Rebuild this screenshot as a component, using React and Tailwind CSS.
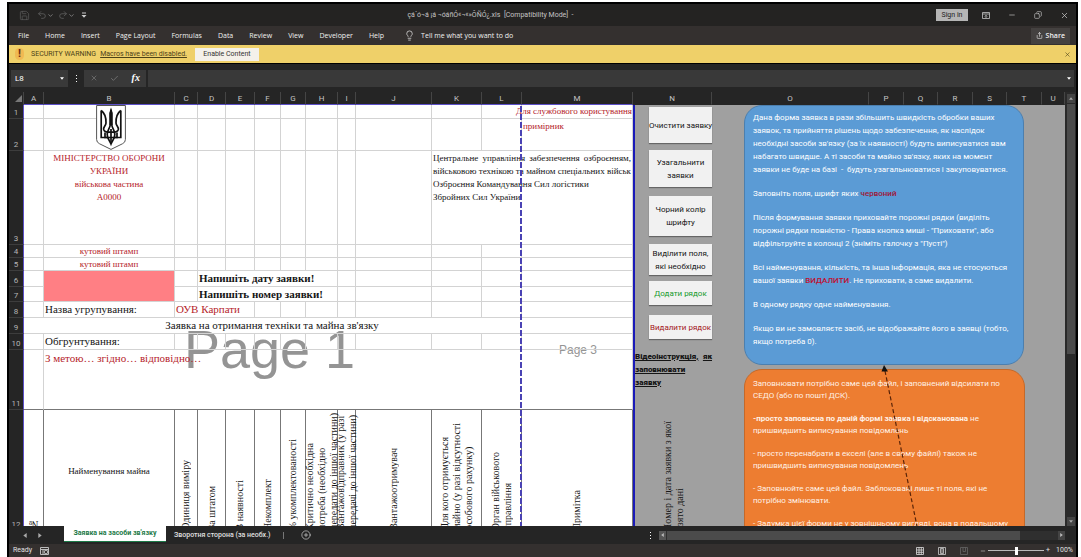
import {
  ChevronDown,
  Check,
  CirclePlus,
  Lightbulb,
  Minus,
  Copy,
  Redo2,
  Save,
  Share,
  Undo2,
  X,
} from "lucide-react";

const menu = ["File", "Home", "Insert", "Page Layout", "Formulas", "Data", "Review", "View", "Developer", "Help"];

const columns = [
  { name: "A", width: "w-[20px]" },
  { name: "B", width: "w-[131px]" },
  { name: "C", width: "w-[23px]" },
  { name: "D", width: "w-[28px]" },
  { name: "E", width: "w-[29px]" },
  { name: "F", width: "w-[26px]" },
  { name: "G", width: "w-[25px]" },
  { name: "H", width: "w-[32px]" },
  { name: "I", width: "w-[18px]" },
  { name: "J", width: "w-[76px]" },
  { name: "K", width: "w-[50px]" },
  { name: "L", width: "w-[40px]" },
  { name: "M", width: "w-[111px]" },
  { name: "N", width: "w-[79px]" },
  { name: "O", width: "w-[157px]" },
  { name: "P", width: "w-[35px]" },
  { name: "Q", width: "w-[34px]" },
  { name: "R", width: "w-[35px]" },
  { name: "S", width: "w-[34px]" },
  { name: "T", width: "w-[35px]" },
  { name: "U", width: "w-auto" },
];

const macros = [
  { lines: ["Очистити заявку"], box: "h-9 mb-[7px]" },
  { lines: ["Узагальнити", "заявки"], box: "h-[37px] mb-[9px]" },
  { lines: ["Чорний колір", "шрифту"], box: "h-10 mb-2" },
  { lines: ["Виділити поля,", "які необхідно"], box: "h-[31px] mb-1.5" },
  { lines: ["Додати рядок"], box: "h-6 mb-2.5 text-[#159a2c]" },
  { lines: ["Видалити рядок"], box: "h-6 mb-2.5 text-[#a3161b]" },
];

const headings = [
  ["№"],
  null,
  ["Одиниця виміру"],
  ["За штатом"],
  ["В наявності"],
  ["Некомплект"],
  ["% укомплектованості"],
  ["Критично необхідна", "потреба (необхідно", "передати до іншої частини)"],
  ["Вантажовідправник (у разі", "передачі до іншої частини)"],
  ["Вантажоотримувач"],
  ["Для кого отримується", "майно (у разі відсутності", "особового рахунку)"],
  ["Орган військового", "управління"],
  ["Примітка"],
];

const Lines = ({ lines }) => lines.map((line) => <span key={line} className="block">{line}</span>);

function Cell({ className = "", children, ...rest }) {
  return (
    <td className={`border-b border-r border-[#d3d3d3] p-0 whitespace-nowrap ${className}`} {...rest}>
      {children}
    </td>
  );
}

function Blanks({ count }) {
  return Array.from({ length: count }, (_, i) => <Cell key={i} />);
}

function RowHead({ n }) {
  return (
    <th scope="row" className="border-b border-r border-b-[#3d3d3d] border-r-[#5c50c8] bg-[#252525] p-0 align-bottom font-[Roboto,sans-serif] text-[8px] leading-[11px] font-normal text-[#b5b5b5]">
      {n}
    </th>
  );
}

function Vertical({ lines }) {
  return (
    <div className="flex justify-center">
      <div className="rotate-180 text-[10px] leading-[12px] [writing-mode:vertical-rl]">
        <Lines lines={lines} />
      </div>
    </div>
  );
}

function Emblem() {
  return (
    <svg viewBox="0 0 30 45" className="absolute top-0 left-[52px] h-[45px] w-[30px]">
      <path d="M.6.5h28.8v34q0 3-3 4.300L15 44.400 3.600 38.800q-3-1.300-3-4.300z" fill="#fff" stroke="#555" />
      <g fill="none" stroke="#111" strokeWidth="1.700">
        <path d="M5.200 5.500v27h6.300M24.800 5.500v27h-6.300" />
        <path d="M5.200 5.500c4 3 5 7 4.800 12.500-.1 3-3 4-2.300 6.500.7 2.300 4 3 7.300 2.500M24.800 5.500c-4 3-5 7-4.800 12.500.1 3 3 4 2.300 6.500-.7 2.300-4 3-7.300 2.500" />
        <path d="M15 5c-1.500 4 0 10-.8 15-.5 4-3 5-3 9.500 0 4 2.300 6 3.800 9.500 1.500-3.500 3.800-5.500 3.800-9.500 0-4.500-2.500-5.500-3-9.500-.8-5 .7-11-.8-15z" />
        <path d="M15 24v13M9 27.500v5h12v-5" />
      </g>
      <path d="M15 4l1.600 4v12h-3.200V8z" fill="#111" />
    </svg>
  );
}

function TitleBar() {
  return (
    <header className="flex h-[22px] items-center bg-[#242322] text-[7px] text-[#c4c4c4]">
      <div className="flex items-center pl-2.5 text-[#5e5e5e]">
        <button aria-label="Save"><Save className="size-[11px]" strokeWidth={1.5} /></button>
        <button aria-label="Undo" className="ml-[7px] flex items-center"><Undo2 className="size-[10px]" /><ChevronDown className="size-[7px] text-[#aaa]" /></button>
        <button aria-label="Redo" className="ml-1 flex items-center"><Redo2 className="size-[10px]" /><ChevronDown className="size-[7px] text-[#aaa]" /></button>
        <button aria-label="Customize" className="ml-1.5 text-[#ccc]">
          <svg viewBox="0 0 6 6" className="size-1.5"><path d="M1 .5h4v1H1zM.5 3h5L3 5.800z" fill="currentColor" /></svg>
        </button>
      </div>
      <h1 className="flex-1 pr-[42px] text-center whitespace-pre">çá´ó¬á ¡á ¬óáñÓ«¬«»ÔÑÓ¿.xls  [Compatibility Mode]  -</h1>
      <button className="h-3 w-8 bg-[#b5b5b5] leading-[11px] text-[#222]">Sign in</button>
      <button aria-label="Ribbon options" className="ml-3.5">
        <svg viewBox="0 0 8 7" className="h-[7px] w-2" fill="none" stroke="currentColor"><path d="M.5.5h7v6h-7zM.5 2h7M4 6V3.500M2.800 4.500L4 3.300l1.200 1.200" strokeWidth=".8" /></svg>
      </button>
      <button aria-label="Minimize" className="ml-[18px]"><Minus className="size-2" /></button>
      <button aria-label="Restore" className="ml-[18px]"><Copy className="size-2 -scale-x-100" /></button>
      <button aria-label="Close" className="mr-[7px] ml-[18px]"><X className="size-[9px]" /></button>
    </header>
  );
}

function Ribbon() {
  return (
    <nav className="flex h-[19px] items-center bg-[#34302f] pr-1.5 pl-[9px] font-['Open_Sans',sans-serif] text-[7px] text-[#f0f0f0]">
      <div className="flex gap-4">
        {menu.map((item) => <button key={item}>{item}</button>)}
      </div>
      <button className="ml-5 flex items-center gap-1.5">
        <Lightbulb className="size-[11px]" strokeWidth={1.5} />
        Tell me what you want to do
      </button>
      <button className="ml-auto flex h-4 items-center gap-[3px] bg-[#444140] px-[5px] font-semibold">
        <Share className="size-[7px]" /> Share
      </button>
    </nav>
  );
}

function Warning() {
  return (
    <div className="flex h-[18px] items-center bg-[#efd069] pr-[5px] pl-1.5 text-[7px] text-[#4c4218]">
      <span className="grid h-3 w-[9px] place-items-center rounded-full bg-[#f0b952] text-[11px] leading-3 font-bold text-[#6d2f14]">!</span>
      <span className="ml-[7px]">SECURITY WARNING</span>
      <a href="#macros" className="ml-1 underline">Macros have been disabled.</a>
      <button className="ml-2 h-[13px] w-16 bg-[#f4f1ea] text-[#333]">Enable Content</button>
      <button aria-label="Dismiss" className="ml-auto"><X className="size-[7px]" /></button>
    </div>
  );
}

function FormulaBar() {
  return (
    <div className="flex h-[29px] items-center border-t border-black bg-[#252525] px-0.5 text-[9px] text-white">
      <div className="flex h-[17px] w-[57px] items-center bg-[#393939] px-1">
        <input aria-label="Name box" defaultValue="L8" className="w-10 min-w-0 bg-transparent text-[8px] outline-none" />
        <svg viewBox="0 0 6 4" className="ml-auto h-[3px] w-1"><path d="M0 0h6L3 4z" fill="#fff" /></svg>
      </div>
      <span className="flex w-4 flex-col items-center gap-0.5">
        <i className="size-px bg-white" /><i className="size-px bg-white" /><i className="size-px bg-white" />
      </span>
      <div className="mr-0.5 flex h-[17px] w-[62px] items-center justify-around bg-[#393939] text-[#7d7d7d]">
        <button aria-label="Cancel"><X className="size-2" /></button>
        <button aria-label="Enter"><Check className="size-[9px]" /></button>
        <button aria-label="Insert function" className="font-['Liberation_Serif',serif] text-[10px] font-bold text-white italic">fx</button>
      </div>
      <div className="flex h-[17px] flex-1 items-center bg-[#393939] pr-[3px]">
        <input aria-label="Formula" className="min-w-0 flex-1 bg-transparent outline-none" />
        <svg viewBox="0 0 6 4" className="h-[3px] w-1"><path d="M0 0h6L3 4z" fill="#fff" /></svg>
      </div>
    </div>
  );
}

function Notes() {
  return (
    <div className="relative h-[426px] overflow-hidden pl-8 font-[Roboto,sans-serif] text-[8px] text-white">
      <section className="flex h-[260px] w-[280px] flex-col gap-[11px] rounded-[18px] border border-[#4c7fae] bg-[#5b9bd5] px-2 pt-[5px] leading-[13px]">
        <p>
          <Lines lines={[
            "Дана форма заявка в рази збільшить швидкість обробки ваших",
            "заявок, та прийняття рішень щодо забезпечення, як наслідок",
            "необхідні засоби зв'язку (за їх наявності) будуть виписуватися вам",
            "набагато швидше. А ті засоби та майно зв'язку, яких на момент",
            "заявки не буде на базі  -  будуть узагальнюватися і закуповуватися.",
          ]} />
        </p>
        <p>Заповніть поля, шрифт яких <b className="font-medium text-[#a01535]">червоний</b></p>
        <p>
          <Lines lines={[
            "Після формування заявки приховайте порожні рядки (виділіть",
            "порожні рядки повністю - Права кнопка миші - \"Приховати\", або",
            "відфільтруйте в колонці 2 (зніміть галочку з \"Пусті\")",
          ]} />
        </p>
        <p>
          Всі найменування, кількість, та інша інформація, яка не стосуються<br />
          вашої заявки <b className="font-medium text-[#c01030]">ВИДАЛИТИ</b>. Не приховати, а саме видалити.
        </p>
        <p>В одному рядку одне найменування.</p>
        <p><Lines lines={["Якщо ви не замовляєте засіб, не відображайте його в заявці (тобто,", "якщо потреба 0)."]} /></p>
      </section>
      <section className="mt-1 flex h-[200px] w-[281px] flex-col gap-[11px] rounded-[18px] border border-[#c4692a] bg-[#ed7d31] px-2 pt-2 leading-3 text-[#fff1e6]">
        <p><Lines lines={["Заповнювати потрібно саме цей файл, і заповнений відсилати по", "СЕДО (або по пошті ДСК)."]} /></p>
        <p><b>-просто заповнена по даній формі заявка і відсканована</b> не<br />пришвидшить виписування повідомлень</p>
        <p><Lines lines={["- просто перенабрати в екселі (але в свому файлі) також не", "пришвидшить виписування повідомлень"]} /></p>
        <p><Lines lines={["- Заповнюйте саме цей файл. Заблоковані лише ті поля, які не", "потрібно змінювати."]} /></p>
        <p>- Задумка цієї форми не у зовнішньому вигляді, вона в подальшому</p>
      </section>
      <svg viewBox="0 0 40 166" className="absolute top-[260px] left-[169px] h-[166px] w-10">
        <path d="M4 6L37 166" stroke="#5a2408" strokeWidth="1.200" strokeDasharray="4 2.500" />
        <path d="M3 0l4 6.500H.5z" fill="#111" />
      </svg>
    </div>
  );
}

function Sheet() {
  return (
    <div className="relative min-w-0 flex-1 overflow-hidden bg-white font-['Liberation_Serif',serif] text-[9px] leading-[13px] text-[#151515]">
      <span className="absolute top-[227px] left-[175px] font-['Liberation_Sans',sans-serif] text-[54px] leading-[60px] text-[#949494]">Page 1</span>
      <span className="absolute top-[251px] left-[550px] font-['Liberation_Sans',sans-serif] text-[12px] leading-[14px] text-[#949494]">Page 3</span>
      <table className="relative w-full table-fixed border-separate border-spacing-0">
        <colgroup>
          <col className="w-[15px]" />
          {columns.map(({ name, width }) => <col key={name} className={width} />)}
        </colgroup>
        <thead className="bg-[#252525] font-[Roboto,sans-serif] text-[8px] leading-[11px] text-[#c4c4c4]">
          <tr className="h-[13px]">
            <th aria-label="Select all" className="border-r border-[#454545] p-0">
              <svg viewBox="0 0 8 8" className="ml-auto size-2"><path d="M7 0v7H0z" fill="#777" /></svg>
            </th>
            {columns.map(({ name }, i) => (
              <th key={name} scope="col" className={`border-r border-b border-r-[#454545] p-0 font-normal ${i < 13 ? "border-b-[#5c50c8]" : "border-b-[#252525]"}`}>{name}</th>
            ))}
          </tr>
        </thead>
        <tbody>
          <tr className="h-[14px]">
            <RowHead n={1} />
            <Cell />
            <Cell className="relative"><Emblem /></Cell>
            <Blanks count={10} />
            <Cell className="text-[#b5232a]">
              <span className="flex justify-end">Для службового користування</span>
            </Cell>
            <td rowSpan={11} className="border-l-2 border-[#1a1ab8] bg-[#a0a0a0] p-0 align-top font-[Roboto,sans-serif] text-[8px]">
              <div className="flex flex-col items-end pt-0.5">
                {macros.map(({ lines, box }) => (
                  <button key={lines[0]} className={`w-[63px] bg-[#f1f1f1] text-center leading-[13px] whitespace-nowrap shadow-[0_1px_1px_#666] ${box}`}>
                    <Lines lines={lines} />
                  </button>
                ))}
              </div>
              <a href="#video" className="block pt-px text-[8px] leading-[13px] font-black underline">
                <span className="flex justify-between whitespace-pre"><span>Відеоінструкція,</span><span>як</span></span>
                заповнювати<br />заявку
              </a>
            </td>
            <td rowSpan={12} colSpan={7} className="bg-[#a0a0a0] p-0 align-top whitespace-pre"><Notes /></td>
          </tr>
          <tr className="h-[32px]">
            <RowHead n={2} />
            <Blanks count={12} />
            <Cell className="pt-px pl-px align-top text-[#b5232a]">примірник</Cell>
          </tr>
          <tr className="h-[94px]">
            <RowHead n={3} />
            <Cell />
            <Cell className="pt-px text-center align-top text-[#b5232a]">
              <Lines lines={["МІНІСТЕРСТВО ОБОРОНИ", "УКРАЇНИ", "військова частина", "А0000"]} />
            </Cell>
            <Blanks count={8} />
            <Cell colSpan={3} className="px-px pt-px align-top">
              <span className="flex justify-between"><span>Центральне</span><span>управління</span><span>забезпечення</span><span>озброєнням,</span></span>
              <span className="flex justify-between"><span>військовою</span><span>технікою</span><span>та</span><span>майном</span><span>спеціальних</span><span>військ</span></span>
              <Lines lines={["Озброєння Командування Сил логістики", "Збройних Сил України"]} />
            </Cell>
          </tr>
          {[4, 5].map((n) => (
            <tr key={n} className="h-[13px] leading-[12px]">
              <RowHead n={n} />
              <Cell />
              <Cell className="text-center text-[#b5232a]">кутовий штамп</Cell>
              <Blanks count={11} />
            </tr>
          ))}
          <tr className="h-4 text-[11px]">
            <RowHead n={6} />
            <Cell />
            <Cell rowSpan={2} className="bg-[#ff7f84]" />
            <Cell />
            <Cell colSpan={5} className="pl-px font-bold">Напишіть дату заявки!</Cell>
            <Blanks count={5} />
          </tr>
          <tr className="h-[15px] text-[11px]">
            <RowHead n={7} />
            <Blanks count={2} />
            <Cell colSpan={5} className="pl-px font-bold">Напишіть номер заявки!</Cell>
            <Blanks count={5} />
          </tr>
          <tr className="h-4 text-[11px]">
            <RowHead n={8} />
            <Cell />
            <Cell className="pl-px">Назва угрупування:</Cell>
            <Cell colSpan={3} className="pl-px text-[#b5232a]">ОУВ Карпати</Cell>
            <Blanks count={8} />
          </tr>
          <tr className="h-4 text-[11px]">
            <RowHead n={9} />
            <Cell colSpan={13} className="pr-28 text-center">Заявка на отримання техніки та майна зв'язку</Cell>
          </tr>
          <tr className="h-4 text-[11px]">
            <RowHead n={10} />
            <Cell />
            <Cell className="pl-px">Обгрунтування:</Cell>
            <Blanks count={11} />
          </tr>
          <tr className="h-[60px] text-[11px]">
            <RowHead n={11} />
            <Cell className="border-b-[#777]" />
            <Cell colSpan={12} className="border-b-[#777] pt-0.5 pl-px align-top text-[#b5232a]">З метою… згідно… відповідно…</Cell>
          </tr>
          <tr className="h-[121px]">
            <RowHead n={12} />
            {headings.map((lines, i) => (
              <Cell key={i} className="border-r-[#777] align-bottom">
                {lines ? <Vertical lines={lines} /> : <p className="pb-[52px] text-center">Найменування майна</p>}
              </Cell>
            ))}
            <td className="border-l-2 border-[#1a1ab8] bg-[#a0a0a0] p-0 align-bottom whitespace-nowrap">
              <Vertical lines={["Номер і дата заявки з якої", "взято дані"]} />
            </td>
          </tr>
        </tbody>
      </table>
      <div className="absolute top-[14px] bottom-0 left-[511px] w-0.5 bg-[repeating-linear-gradient(#4a42b4_0_6px,transparent_6px_8px)]" />
    </div>
  );
}

function SheetTabs() {
  return (
    <div className="flex h-[18px] items-center bg-[#252525] pr-[11px] text-[7px] font-medium text-[#e0e0e0]">
      <div className="flex w-[55px] gap-[11px] pl-3.5">
        <button aria-label="Previous sheet"><svg viewBox="0 0 4 6" className="h-[5px] w-1"><path d="M4 0v6L0 3z" fill="#aaa" /></svg></button>
        <button aria-label="Next sheet"><svg viewBox="0 0 4 6" className="h-[5px] w-1"><path d="M0 0v6l4-3z" fill="#aaa" /></svg></button>
      </div>
      <button className="h-4 w-[102px] self-start border-b border-[#1d7a48] bg-white font-bold whitespace-nowrap text-[#1d7a48]">Заявка на засоби зв'язку</button>
      <button className="ml-2 border-r border-[#777] pr-3 whitespace-nowrap">Зворотня сторона (за необх.)</button>
      <button aria-label="New sheet" className="ml-[17px]"><CirclePlus className="size-[10px]" strokeWidth={1.5} /></button>
      <span className="mr-2 ml-auto flex flex-col gap-0.5">
        <i className="size-px bg-white" /><i className="size-px bg-white" /><i className="size-px bg-white" />
      </span>
      <div className="flex h-[9px] w-[406px] items-center bg-[#2f2f2f]">
        <button aria-label="Scroll left" className="grid h-[9px] w-[7px] place-items-center bg-[#555]"><svg viewBox="0 0 4 6" className="h-1 w-[3px]"><path d="M4 0v6L0 3z" fill="#bbb" /></svg></button>
        <span className="ml-px h-[9px] w-[353px] bg-[#4b4b4b]" />
        <button aria-label="Scroll right" className="ml-auto grid h-[9px] w-[7px] place-items-center bg-[#444]"><svg viewBox="0 0 4 6" className="h-1 w-[3px]"><path d="M0 0v6l4-3z" fill="#bbb" /></svg></button>
      </div>
    </div>
  );
}

function StatusBar() {
  return (
    <footer className="flex h-[13px] items-center bg-[#34302f] pr-[3px] pl-1 text-[7px] text-[#e0e0e0]">
      <span>Ready</span>
      <svg viewBox="0 0 9 8" className="ml-2 h-2 w-[9px]" fill="none" stroke="#bbb"><path d="M.5.5h8v7h-8zM.5 2.500h8M3 2.500v5" /><circle cx="6" cy="5" r="1.800" fill="#34302f" /></svg>
      <div className="ml-auto flex items-center gap-3.5">
        <button aria-label="Normal"><svg viewBox="0 0 8 8" className="size-2" fill="none" stroke="#ddd" strokeWidth=".8"><path d="M.5.500h7v7h-7zM3 .5v7M5.300.5v7M.5 3h7M.5 5.300h7" /></svg></button>
        <button aria-label="Page layout"><svg viewBox="0 0 8 8" className="size-2" fill="none" stroke="#ccc" strokeWidth=".8"><path d="M.5.5h7v7h-7zM2.500 1.500h3v5h-3zM3 3h2M3 5h2" /></svg></button>
        <button aria-label="Page break preview"><svg viewBox="0 0 8 8" className="size-2" fill="none" stroke="#666" strokeWidth=".8"><path d="M.5.5h7v7h-7zM3 .5v4h2.500v-4" /></svg></button>
      </div>
      <button aria-label="Zoom out" className="ml-3"><Minus className="size-1.5" /></button>
      <input type="range" aria-label="Zoom" min="0" max="100" defaultValue="50" className="mx-0.5 h-2 w-14 appearance-none bg-[linear-gradient(#bbb,#bbb)] bg-[length:100%_1px] bg-center bg-no-repeat [&::-webkit-slider-thumb]:h-2 [&::-webkit-slider-thumb]:w-[3px] [&::-webkit-slider-thumb]:appearance-none [&::-webkit-slider-thumb]:bg-white" />
      <button aria-label="Zoom in">+</button>
      <span className="ml-1.5">100%</span>
    </footer>
  );
}

export default function App() {
  return (
    <div className="h-screen min-h-[400px] bg-white pt-0.5 pr-[3px] pl-[7px]">
      <main className="flex h-full flex-col border-x-2 border-t-2 border-black font-[Roboto,'Noto_Sans',sans-serif] leading-none">
        <TitleBar />
        <Ribbon />
        <Warning />
        <FormulaBar />
        <div className="flex min-h-0 flex-1 bg-[#252525]">
          <Sheet />
          <div className="flex w-[11px] flex-col items-center bg-[#2a2a2a] pt-0.5">
            <button aria-label="Scroll up" className="grid h-[9px] w-2 place-items-center bg-[#444]"><svg viewBox="0 0 6 4" className="h-[3px] w-1"><path d="M0 4h6L3 0z" fill="#aaa" /></svg></button>
            <span className="mt-px h-[250px] w-2 bg-[#4b4b4b]" />
            <button aria-label="Scroll down" className="mt-auto grid h-[9px] w-2 place-items-center bg-[#444]"><svg viewBox="0 0 6 4" className="h-[3px] w-1"><path d="M0 0h6L3 4z" fill="#aaa" /></svg></button>
          </div>
        </div>
        <SheetTabs />
        <StatusBar />
      </main>
    </div>
  );
}
